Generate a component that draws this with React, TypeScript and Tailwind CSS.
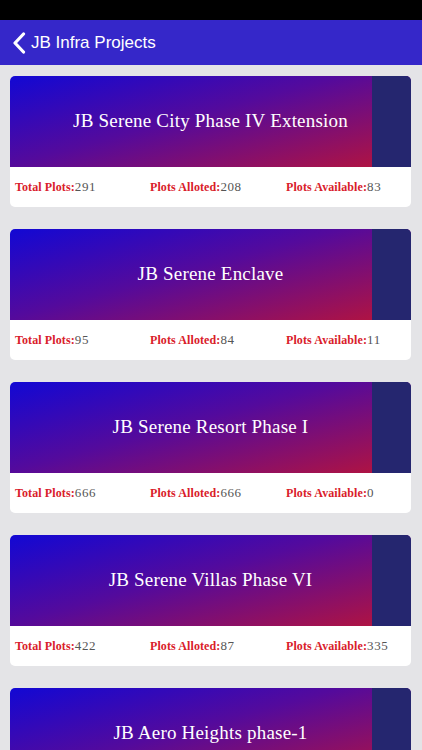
import React from "react"

type Project = {
  name: string
  total: number | null
  alloted: number | null
  available: number | null
}

const projects: Project[] = [
  { name: "JB Serene City Phase IV Extension", total: 291, alloted: 208, available: 83 },
  { name: "JB Serene Enclave", total: 95, alloted: 84, available: 11 },
  { name: "JB Serene Resort Phase I", total: 666, alloted: 666, available: 0 },
  { name: "JB Serene Villas Phase VI", total: 422, alloted: 87, available: 335 },
  { name: "JB Aero Heights phase-1", total: null, alloted: null, available: null },
]

const serif = { fontFamily: '"Liberation Serif", "DejaVu Serif", serif' }

const Stat = ({ label, value }: { label: string; value: number | null }) => (
  <div className="whitespace-nowrap text-[12px]" style={serif}>
    <span className="font-bold text-[#d9202a] tracking-[0.1px]">{label}:</span>
    <span className="text-[#555] text-[13px] tracking-[0.6px]">{value}</span>
  </div>
)

const ProjectCard = ({ project }: { project: Project }) => (
  <div className="rounded-[5px] bg-white overflow-hidden shrink-0">
    <div className="relative h-[91px] bg-[linear-gradient(165deg,#1208d4_0%,#540a9c_45%,#b8143a_100%)] flex items-center justify-center">
      <div className="absolute right-0 top-0 bottom-0 w-[39px] bg-[#25266f]" />
      <span className="relative text-white text-[19px] tracking-[0.2px]" style={serif}>{project.name}</span>
    </div>
    <div className="h-[40px] grid grid-cols-[135px_136px_1fr] items-center pl-[5px]">
      <Stat label="Total Plots" value={project.total} />
      <Stat label="Plots Alloted" value={project.alloted} />
      <Stat label="Plots Available" value={project.available} />
    </div>
  </div>
)

const App: React.FC = () => {
  return (
    <div className="w-[422px] h-[750px] overflow-hidden bg-[#e4e4e7] flex flex-col">
      <div className="h-[20px] bg-black shrink-0" />
      <div className="h-[45px] bg-[#3527c9] flex items-center shrink-0 pl-[12px]">
        <svg width="14" height="22" viewBox="0 0 14 22" fill="none">
          <path d="M11.5 2 L3 11 L11.5 20" stroke="white" strokeWidth="3.2" strokeLinecap="round" strokeLinejoin="round" />
        </svg>
        <span className="ml-[5px] text-white text-[17px]" style={{ fontFamily: '"Liberation Sans", Arial, sans-serif' }}>JB Infra Projects</span>
      </div>
      <div className="flex flex-col gap-[22px] px-[10px] pt-[11px] pr-[11px]">
        {projects.map((p) => (
          <ProjectCard key={p.name} project={p} />
        ))}
      </div>
    </div>
  )
}

export default App
